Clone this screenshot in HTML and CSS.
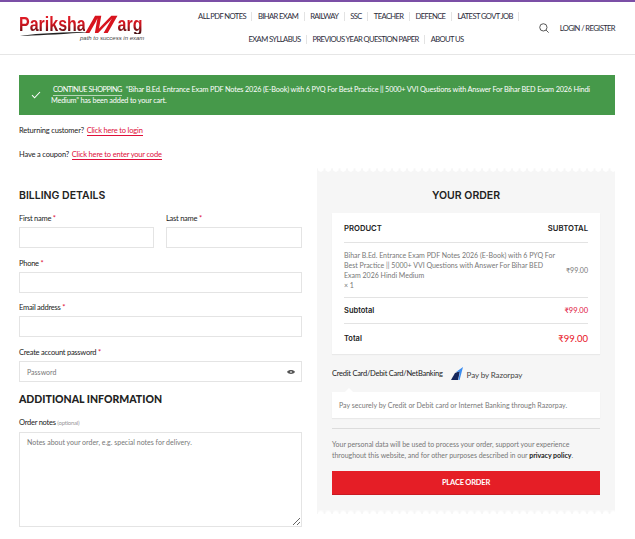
FILE: index.html
```html
<!DOCTYPE html>
<html lang="en">
<head>
    <meta charset="UTF-8">
    <meta name="viewport" content="width=device-width, initial-scale=1.0">
    <title>Checkout - Pariksha Marg</title>
    <link rel="stylesheet" href="styles.css">
</head>
<body>
    <header class="site-header">
        <a class="logo" href="#">
            <span class="logo-name"><span>Pariksha</span><span class="logo-m">M</span><span>arg</span></span>
            <svg class="logo-swoosh" width="70" height="4" viewBox="0 0 70 4"><path d="M0 4 C20 1 45 0 70 0 C45 2 25 3 4 4 Z" fill="#222"/></svg>
            <span class="logo-tag">path to success in exam</span>
        </a>
        <nav class="main-nav">
            <ul>
                <li><a href="#">ALL PDF NOTES</a></li>
                <li><a href="#">BIHAR EXAM</a></li>
                <li><a href="#">RAILWAY</a></li>
                <li><a href="#">SSC</a></li>
                <li><a href="#">TEACHER</a></li>
                <li><a href="#">DEFENCE</a></li>
                <li><a href="#">LATEST GOVT JOB</a></li>
                <li><a href="#">EXAM SYLLABUS</a></li>
                <li><a href="#">PREVIOUS YEAR QUESTION PAPER</a></li>
                <li><a href="#">ABOUT US</a></li>
            </ul>
        </nav>
        <div class="header-tools">
            <svg width="10" height="10" viewBox="0 0 11 11" fill="none" stroke="#333" stroke-width="0.9"><circle cx="4.8" cy="4.8" r="4"/><path d="M7.8 7.8 L10.6 10.6"/></svg>
            <a href="#">LOGIN / REGISTER</a>
        </div>
    </header>

    <main class="page">
        <div class="notice">
            <svg class="notice-check" width="10" height="8" viewBox="0 0 10 8" fill="none" stroke="#fff" stroke-width="1.1"><path d="M1 4.2 L3.6 6.8 L9 1"/></svg>
            <p><a class="notice-btn" href="#">CONTINUE SHOPPING</a> &ldquo;Bihar B.Ed. Entrance Exam PDF Notes 2026 (E-Book) with 6 PYQ For Best Practice || 5000+ VVI Questions with Answer For Bihar BED Exam 2026 Hindi Medium&rdquo; has been added to your cart.</p>
        </div>

        <p class="toggle toggle-login">Returning customer? <a href="#">Click here to login</a></p>
        <p class="toggle toggle-coupon">Have a coupon? <a href="#">Click here to enter your code</a></p>

        <div class="checkout">
            <form class="billing">
                <h3 class="billing-title">BILLING DETAILS</h3>
                <div class="field-row">
                    <div class="field">
                        <label>First name <b>*</b></label>
                        <input type="text">
                    </div>
                    <div class="field">
                        <label>Last name <b>*</b></label>
                        <input type="text">
                    </div>
                </div>
                <div class="field">
                    <label>Phone <b>*</b></label>
                    <input type="text">
                </div>
                <div class="field">
                    <label>Email address <b>*</b></label>
                    <input type="text">
                </div>
                <div class="field">
                    <label>Create account password <b>*</b></label>
                    <div class="password-wrap">
                        <input type="password" placeholder="Password">
                        <svg class="eye" width="8" height="6" viewBox="0 0 8 6"><path d="M0 3 C1.5 0.4 6.5 0.4 8 3 C6.5 5.6 1.5 5.6 0 3 Z" fill="#555"/><circle cx="4" cy="3" r="1" fill="#ccc"/></svg>
                    </div>
                </div>
                <h3 class="extra-title">ADDITIONAL INFORMATION</h3>
                <label class="notes-label">Order notes <small>(optional)</small></label>
                <textarea placeholder="Notes about your order, e.g. special notes for delivery."></textarea>
            </form>

            <aside class="order">
                <h3 class="order-title">YOUR ORDER</h3>
                <div class="order-card">
                    <div class="order-row order-head">
                        <span>PRODUCT</span>
                        <span>SUBTOTAL</span>
                    </div>
                    <div class="order-row order-item">
                        <span class="item-name">Bihar B.Ed. Entrance Exam PDF Notes 2026 (E-Book) with 6 PYQ For Best Practice || 5000+ VVI Questions with Answer For Bihar BED Exam 2026 Hindi Medium<br>&times; 1</span>
                        <span>&#8377;99.00</span>
                    </div>
                    <div class="order-row order-sub">
                        <span>Subtotal</span>
                        <span class="price">&#8377;99.00</span>
                    </div>
                    <div class="order-row order-total">
                        <span>Total</span>
                        <span class="price">&#8377;99.00</span>
                    </div>
                </div>

                <div class="pay-method">
                    <span>Credit Card/Debit Card/NetBanking</span>
                    <svg class="rzp-icon" width="12" height="13" viewBox="0 0 12 13"><path d="M0 13 L4 6 L9 4 L7 13 Z" fill="#14265c"/><path d="M5 5 L12 0 L8.6 13 L7.4 13 L9 4.6 Z" fill="#3b8df0"/></svg>
                    <span class="rzp-text">Pay by Razorpay</span>
                </div>
                <div class="pay-box">Pay securely by Credit or Debit card or Internet Banking through Razorpay.</div>

                <p class="privacy">Your personal data will be used to process your order, support your experience throughout this website, and for other purposes described in our <a href="#">privacy policy</a>.</p>
                <button type="button" class="place-order">PLACE ORDER</button>
            </aside>
        </div>
    </main>
</body>
</html>
```

FILE: styles.css
```css
* {
    box-sizing: border-box;
}

body {
    margin: 0;
    font-family: 'Lato', 'Liberation Sans', sans-serif;
    font-size: 7.5px;
    color: #222;
    background: white;
    border-top: 2px solid #7b4fa6;
}

a {
    color: inherit;
    text-decoration: none;
}

p {
    margin: 0;
}

.site-header {
    display: flex;
    height: 53px;
    padding: 0 20px 0 19px;
    border-bottom: 1px solid #e6e6e6;
}

.logo {
    position: relative;
    width: 130px;
    padding-top: 12px;
    font-family: 'Liberation Sans', sans-serif;
}

.logo-name {
    display: flex;
    align-items: flex-end;
    height: 20px;
    width: 170px;
    font-size: 20px;
    line-height: 20px;
    font-weight: bold;
    white-space: nowrap;
    transform: scaleX(0.8);
    transform-origin: left;
}

.logo-name span {
    background: linear-gradient(180deg, #e8202a 0%, #c8141e 55%, #3a1012 100%);
    -webkit-background-clip: text;
    background-clip: text;
    color: transparent;
}

.logo-name .logo-m {
    display: inline-block;
    font-size: 25px;
    line-height: 20px;
    font-style: italic;
    margin: 0 10px 0 9px;
    transform: scaleX(1.6) skewX(-14deg);
    color: #d8141e;
    background: none;
}

.logo-swoosh {
    position: absolute;
    left: 1px;
    top: 30px;
}

.logo-tag {
    position: absolute;
    left: 61px;
    top: 33px;
    font-size: 6px;
    font-style: italic;
    color: #444;
    white-space: nowrap;
}

.main-nav {
    width: 340px;
    margin-left: 37px;
}

.main-nav ul {
    display: flex;
    flex-wrap: wrap;
    justify-content: center;
    margin: 0;
    padding: 3px 0 0;
    list-style: none;
}

.main-nav li {
    display: flex;
    align-items: center;
    height: 23px;
}

.main-nav a {
    padding: 0 5.5px;
    line-height: 9px;
    font-size: 7.6px;
    letter-spacing: -0.6px;
    color: #2b2b3a;
    border-right: 1px solid #e3e3e3;
}

.main-nav li:last-child a {
    border-right: none;
}

.header-tools {
    display: flex;
    align-items: center;
    gap: 11px;
    margin-left: auto;
    font-size: 7.6px;
    letter-spacing: -0.6px;
    color: #2b2b3a;
    white-space: nowrap;
}

.page {
    padding: 20px 20px 0 19px;
}

.notice {
    display: flex;
    align-items: center;
    height: 40px;
    padding: 0 20px 0 12px;
    background: #46994a;
    color: white;
    font-size: 7.3px;
    line-height: 11px;
    letter-spacing: -0.17px;
}

.notice-check {
    flex: none;
    margin-right: 10px;
}

.notice-btn {
    margin-left: 2px;
    margin-right: 2px;
    padding-bottom: 1px;
    letter-spacing: -0.45px;
    border-bottom: 1px solid #b7d6b8;
}

.toggle {
    font-size: 7.5px;
    line-height: 11px;
    letter-spacing: -0.17px;
    color: #222;
}

.toggle a {
    margin-left: 1px;
    color: #e0103a;
    border-bottom: 1px solid #e0103a;
}

.toggle-login {
    margin-top: 10px;
}

.toggle-coupon {
    margin-top: 13px;
}

.checkout {
    display: flex;
    align-items: flex-start;
    gap: 15px;
    margin-top: 8px;
}

.billing {
    width: 283px;
    flex: none;
}

.billing-title {
    margin: 21px 0 0;
    font-family: 'Inter', sans-serif;
    font-size: 10.5px;
    line-height: 14px;
    font-weight: 600;
    color: #222;
}

.field-row {
    display: grid;
    grid-template-columns: 135px 136px;
    gap: 12px;
    margin-top: 10px;
}

.field-row .field {
    margin-top: 0;
}

.field {
    margin-top: 9.7px;
}

label {
    display: block;
    height: 14px;
    line-height: 12px;
    font-size: 7.5px;
    letter-spacing: -0.25px;
    color: #222;
}

label b {
    color: #e0103a;
    font-weight: normal;
}

input, textarea {
    display: block;
    width: 100%;
    height: 21px;
    padding: 0 7px;
    border: 1px solid #e4e4e4;
    border-radius: 0;
    background: white;
    font-family: 'Lato', sans-serif;
    font-size: 7px;
    outline: none;
}

input::placeholder, textarea::placeholder {
    color: #777;
}

.password-wrap {
    position: relative;
}

.eye {
    position: absolute;
    right: 7px;
    top: 8px;
}

.extra-title {
    margin: 10px 0 0;
    font-family: 'Lato', sans-serif;
    font-size: 10.5px;
    line-height: 14px;
    font-weight: 900;
    color: #222;
}

.notes-label {
    margin-top: 11px;
}

.notes-label small {
    font-size: 6px;
    color: #999;
    vertical-align: top;
}

textarea {
    height: 95px;
    padding: 5px 7px;
    margin-top: 1px;
}

.order {
    position: relative;
    width: 298px;
    flex: none;
    height: 346px;
    padding: 0 15px;
    background: #f6f6f6;
}

/* scalloped paper edge */
.order::before, .order::after {
    content: "";
    position: absolute;
    left: 0;
    right: 0;
    height: 3.5px;
    background: radial-gradient(circle at 50% 0, white 3px, transparent 3.5px) 0 0 / 7.5px 3.5px repeat-x;
}

.order::before {
    top: 0;
}

.order::after {
    bottom: 0;
    transform: scaleY(-1);
}

.order-title {
    margin: 0;
    padding-top: 21px;
    font-family: 'Inter', sans-serif;
    font-size: 10.5px;
    line-height: 14px;
    font-weight: 600;
    text-align: center;
    color: #222;
}

.order-card {
    margin-top: 10px;
    padding: 0 12px;
    height: 141px;
    background: white;
    box-shadow: 0 1px 1px rgba(0,0,0,0.05);
}

.order-row {
    display: flex;
    justify-content: space-between;
    align-items: center;
    border-bottom: 1px solid #e3e3e3;
}

.order-head {
    height: 30px;
    padding-top: 1px;
    font-family: 'Inter', sans-serif;
    font-size: 7.7px;
    font-weight: 600;
    color: #222;
}

.order-item {
    height: 55px;
    font-size: 7px;
    line-height: 10px;
    color: #777;
}

.item-name {
    width: 212px;
}

.order-sub {
    height: 26px;
    font-family: 'Inter', sans-serif;
    font-size: 7.5px;
    font-weight: 600;
    color: #222;
}

.order-total {
    height: 29px;
    border-bottom: none;
    font-family: 'Inter', sans-serif;
    font-size: 7.5px;
    font-weight: 600;
    color: #222;
}

.price {
    font-family: 'Lato', sans-serif;
    font-size: 7.5px;
    font-weight: normal;
    color: #e0103a;
}

.order-total .price {
    font-size: 9.5px;
    color: #e81123;
}

.pay-method {
    display: flex;
    align-items: center;
    height: 38px;
    font-size: 7.5px;
    letter-spacing: -0.25px;
    color: #222;
}

.rzp-icon {
    margin-left: 8px;
    margin-top: 1px;
}

.rzp-text {
    margin-left: 4px;
    margin-top: 4px;
    font-size: 8px;
    letter-spacing: -0.1px;
    color: #444;
}

.pay-box {
    position: relative;
    height: 26px;
    padding: 0 7px;
    line-height: 26px;
    font-size: 7px;
    color: #777;
    background: white;
    box-shadow: 0 1px 1px rgba(0,0,0,0.05);
}

.pay-box::before {
    content: "";
    position: absolute;
    left: 13px;
    top: -4px;
    border: 4px solid transparent;
    border-top: none;
    border-bottom-color: white;
}

.privacy {
    margin-top: 10px;
    padding-top: 10px;
    border-top: 1px solid #dcdcdc;
    font-size: 7px;
    line-height: 11px;
    letter-spacing: -0.03px;
    color: #777;
}

.privacy a {
    color: #222;
    font-weight: bold;
}

.place-order {
    display: block;
    width: 100%;
    height: 24px;
    margin-top: 10px;
    border: none;
    border-bottom: 1px solid #c81a22;
    background: #e51e26;
    color: white;
    font-family: 'Lato', sans-serif;
    font-size: 7.5px;
    font-weight: bold;
    letter-spacing: -0.2px;
}
```
